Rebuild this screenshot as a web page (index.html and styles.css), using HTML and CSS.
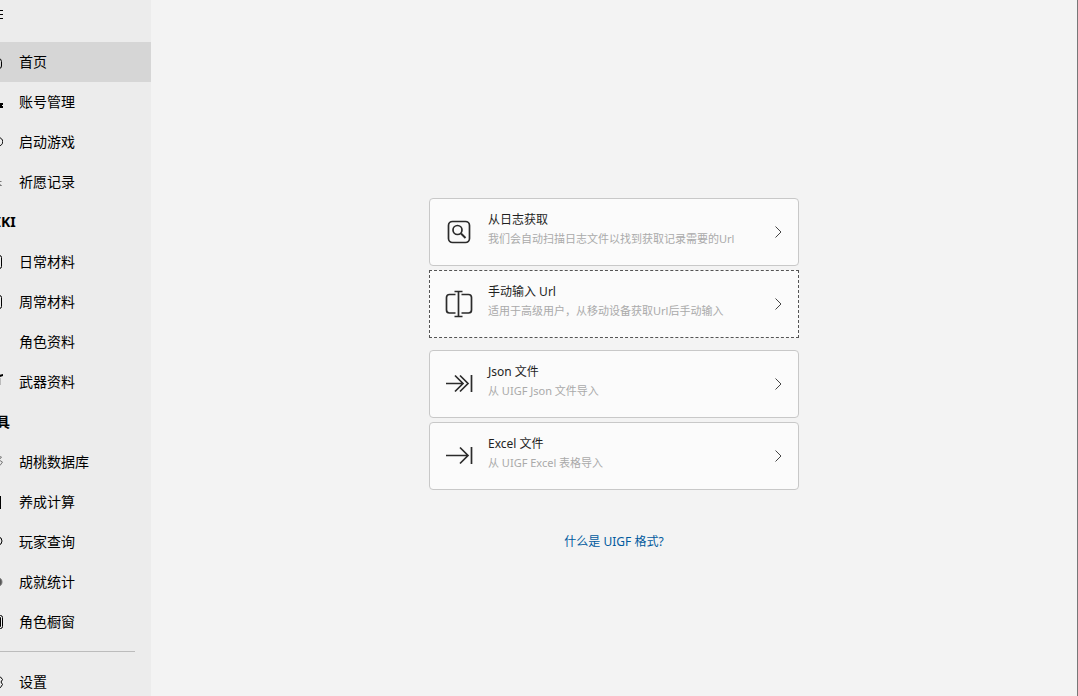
FILE: index.html
```html
<!DOCTYPE html>
<html lang="zh-CN">
<head>
    <meta charset="UTF-8">
    <meta name="viewport" content="width=device-width, initial-scale=1.0">
    <title>祈愿记录</title>
    <link rel="stylesheet" href="styles.css">
</head>
<body>

    <div class="app">
        <!-- Navigation pane -->
        <aside class="sidebar">
            <div class="pane">
                <button class="menu-toggle" aria-label="菜单">
                    <svg class="nav-icon" viewBox="0 0 16 16"><path d="M0 4.500h16M0 8.500h16M0 12.500h16"/></svg>
                </button>

                <nav>
                    <a href="#" class="nav-item active">
                        <svg class="nav-icon" viewBox="0 0 16 16"><path d="M11 4.500Q14.500 4.500 14.500 7.500V12Q14.500 14.500 12 14.500H3.500Q1 14.500 1 12.500V6.500L6 2z"/></svg>
                        <span>首页</span>
                    </a>
                    <a href="#" class="nav-item">
                        <svg class="nav-icon" viewBox="0 0 16 16"><circle cx="7" cy="4.500" r="3"/><path d="M1 14Q1 9.500 6 9.500h3"/><path class="solid" d="M12 9h4v2h-1v1h1v2h-4z"/></svg>
                        <span>账号管理</span>
                    </a>
                    <a href="#" class="nav-item">
                        <svg class="nav-icon" viewBox="0 0 16 16"><path d="M4 3.500h7.500a4.250 4.250 0 0 1 0 8.500H4a4.250 4.250 0 0 1 0-8.500zM3 8h4M5 6v4"/></svg>
                        <span>启动游戏</span>
                    </a>
                    <a href="#" class="nav-item">
                        <svg class="nav-icon soft" viewBox="0 0 16 16"><path d="M7 1l1.500 6.500h6M14.500 11.500H9L7 15l-2-5-4-2 4-2z"/></svg>
                        <span>祈愿记录</span>
                    </a>

                    <h2 class="nav-header">WIKI</h2>
                    <a href="#" class="nav-item">
                        <svg class="nav-icon" viewBox="0 0 16 16"><rect x="1.500" y="1.500" width="13" height="13" rx="2"/><path d="M2 5.500h9"/></svg>
                        <span>日常材料</span>
                    </a>
                    <a href="#" class="nav-item">
                        <svg class="nav-icon" viewBox="0 0 16 16"><rect x="1.500" y="1.500" width="13" height="13" rx="2"/><path d="M2 5.500h9"/></svg>
                        <span>周常材料</span>
                    </a>
                    <a href="#" class="nav-item">
                        <svg class="nav-icon" viewBox="0 0 16 16"><circle cx="6" cy="4.500" r="3"/><path d="M1 15q0-5 5-5t5 5"/></svg>
                        <span>角色资料</span>
                    </a>
                    <a href="#" class="nav-item">
                        <svg class="nav-icon" viewBox="0 0 16 16"><path class="solid" d="M16 0v2l-3 1-8 8-2-2 9-8z"/><path class="faint" d="M13.500 4v7"/></svg>
                        <span>武器资料</span>
                    </a>

                    <h2 class="nav-header">工具</h2>
                    <a href="#" class="nav-item">
                        <svg class="nav-icon soft" viewBox="0 0 16 16"><path d="M10 2l4.500 1L12 6l3.500 2-2.500 3.500M2 8l6-5M3 10l5 4"/></svg>
                        <span>胡桃数据库</span>
                    </a>
                    <a href="#" class="nav-item">
                        <svg class="nav-icon" viewBox="0 0 16 16"><rect x="2.500" y="2.500" width="11" height="12"/><path d="M5 5.500h6M5 9h6"/></svg>
                        <span>养成计算</span>
                    </a>
                    <a href="#" class="nav-item">
                        <svg class="nav-icon" viewBox="0 0 16 16"><circle cx="11" cy="7" r="4"/><path d="M7.500 10.500L3 15"/></svg>
                        <span>玩家查询</span>
                    </a>
                    <a href="#" class="nav-item">
                        <svg class="nav-icon soft" viewBox="0 0 16 16"><circle class="badge" cx="10.500" cy="8" r="4.500"/></svg>
                        <span>成就统计</span>
                    </a>
                    <a href="#" class="nav-item">
                        <svg class="nav-icon" viewBox="0 0 16 16"><rect x="1.500" y="1.500" width="14" height="13" rx="2"/><path d="M4 3.500h9.500v9H4zM4 8h9.500"/></svg>
                        <span>角色橱窗</span>
                    </a>
                </nav>

                <div class="pane-footer">
                    <a href="#" class="nav-item">
                        <svg class="nav-icon" viewBox="0 0 16 16"><circle cx="8" cy="8" r="2.500"/><path d="M6 2.500h4l1 1.500 2.500-1 2 2.500L14 8l1.500 2.500-2 3-2.500-1-1 1.500H6l-1-2-2.500 1-2-3L2 8 .5 5.500l2-2.500L5 4z"/></svg>
                        <span>设置</span>
                    </a>
                </div>
            </div>
        </aside>

        <!-- Import options -->
        <main class="content">
            <div class="card-group">
                <button class="card">
                    <svg class="card-icon" viewBox="0 0 28 28"><rect x="3.500" y="3.500" width="21" height="21" rx="4"/><circle cx="12.500" cy="12" r="4.500"/><path d="M16 15.500l4.500 4.500" stroke-width="2"/></svg>
                    <span class="card-text">
                        <span class="card-title">从日志获取</span>
                        <span class="card-desc">我们会自动扫描日志文件以找到获取记录需要的Url</span>
                    </span>
                    <svg class="chevron" viewBox="0 0 10 12"><path d="M2.500 .5L8 6l-5.500 5.500"/></svg>
                </button>
                <button class="card focused">
                    <svg class="card-icon" viewBox="0 0 28 28"><path d="M10.500 4.500H4.500Q1.500 4.500 1.500 7.500V20Q1.500 23 4.500 23h6M16.500 4.500h7Q26.500 4.500 26.500 7.500V20Q26.500 23 23.500 23h-7M13.500 2v24M9.500 1.500h8M9.500 26.500h8"/></svg>
                    <span class="card-text">
                        <span class="card-title">手动输入 Url</span>
                        <span class="card-desc">适用于高级用户，从移动设备获取Url后手动输入</span>
                    </span>
                    <svg class="chevron" viewBox="0 0 10 12"><path d="M2.500 .5L8 6l-5.500 5.500"/></svg>
                </button>
            </div>

            <div class="card-group">
                <button class="card">
                    <svg class="card-icon" viewBox="0 0 28 28"><path d="M1 13.500h17M10 5.500l8 8-8 8M15 5.500l8 8-8 8M26.500 5v17"/></svg>
                    <span class="card-text">
                        <span class="card-title">Json 文件</span>
                        <span class="card-desc">从 UIGF Json 文件导入</span>
                    </span>
                    <svg class="chevron" viewBox="0 0 10 12"><path d="M2.500 .5L8 6l-5.500 5.500"/></svg>
                </button>
                <button class="card">
                    <svg class="card-icon" viewBox="0 0 28 28"><path d="M1 13.500h22M15 5.500l8 8-8 8M26.500 5v17"/></svg>
                    <span class="card-text">
                        <span class="card-title">Excel 文件</span>
                        <span class="card-desc">从 UIGF Excel 表格导入</span>
                    </span>
                    <svg class="chevron" viewBox="0 0 10 12"><path d="M2.500 .5L8 6l-5.500 5.500"/></svg>
                </button>
            </div>

            <a href="#" class="help-link">什么是 UIGF 格式?</a>
        </main>
    </div>

</body>
</html>
```
FILE: styles.css
```css
* {
    box-sizing: border-box;
}

body {
    margin: 0;
    font-family: "Noto Sans", "Noto Sans CJK SC", sans-serif;
    font-size: 14px;
    color: #000;
    background-color: #f3f3f3;
}

.app {
    display: flex;
    height: 100vh;
    overflow: hidden;
    border-right: 1px solid #777;
}

/* Navigation pane, slid partly past the left edge */
.sidebar {
    flex: 0 0 151px;
    overflow: hidden;
    background-color: #ececec;
}

.pane {
    margin-left: -29px;
}

.menu-toggle {
    display: flex;
    align-items: center;
    width: 48px;
    height: 28px;
    margin-bottom: 14px;
    padding: 0 16px;
    border: none;
    background: none;
}

.nav-item {
    display: flex;
    align-items: center;
    gap: 16px;
    height: 40px;
    padding-left: 16px;
    color: #000;
    text-decoration: none;
}

.nav-item span {
    padding-bottom: 2px;
}

.nav-item:hover {
    background-color: #e2e2e2;
}

.nav-item.active {
    background-color: #d6d6d6;
}

.nav-icon {
    flex: none;
    width: 16px;
    height: 16px;
    fill: none;
    stroke: #000;
    stroke-width: 1;
}

.nav-icon.soft {
    stroke: #777;
}

.nav-icon .solid {
    fill: #000;
    stroke: none;
}

.nav-icon .faint {
    stroke: #bbb;
}

.nav-icon .badge {
    fill: #555;
}

.nav-header {
    margin: 0;
    padding-left: 11px;
    font-size: 14px;
    font-weight: bold;
    line-height: 40px;
}

.pane-footer {
    margin: 9px 16px 0 0;
    padding-top: 10px;
    border-top: 1px solid #bcbcbc;
}

/* Import cards */
.content {
    flex: 1;
    display: flex;
    flex-direction: column;
    align-items: center;
    justify-content: center;
    gap: 12px;
    padding-top: 52px;
}

.card-group {
    display: flex;
    flex-direction: column;
    gap: 4px;
    width: 100%;
    max-width: 370px;
}

.card {
    display: flex;
    align-items: center;
    gap: 15px;
    height: 68px;
    padding: 0 15px;
    border: 1px solid #c8c8c8;
    border-radius: 4px;
    background-color: #fbfbfb;
    font-family: inherit;
    text-align: left;
}

.card:hover {
    background-color: #f6f6f6;
}

.card.focused {
    border: 1px dashed #555;
    border-radius: 0;
}

.card-icon {
    flex: none;
    width: 28px;
    height: 28px;
    fill: none;
    stroke: #2b2b2b;
    stroke-width: 1.7;
}

.card-text {
    flex: 1;
    display: flex;
    flex-direction: column;
    padding-bottom: 6px;
}

.card-title {
    font-size: 12px;
    line-height: 20px;
    color: #1f1f1f;
}

.card-desc {
    font-size: 11px;
    line-height: 18px;
    color: #aaa;
}

.chevron {
    flex: none;
    width: 10px;
    height: 12px;
    fill: none;
    stroke: #444;
}

.help-link {
    margin-top: 30px;
    font-size: 12px;
    line-height: 19px;
    color: #005a9e;
    text-decoration: none;
}

.help-link:hover {
    text-decoration: underline;
}
```
